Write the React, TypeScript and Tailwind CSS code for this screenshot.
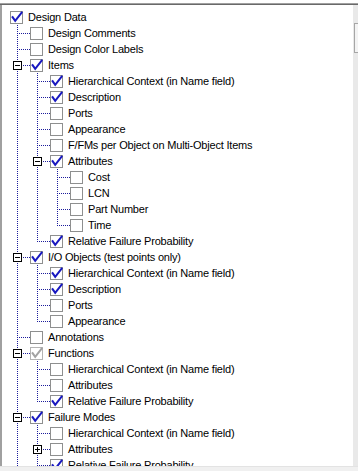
import React from "react";

type Check = "on" | "off" | "gray";
type Node = { label: string; level: number; check: Check; exp?: "minus" | "plus" };

const nodes: Node[] = [
  { label: "Design Data", level: 0, check: "on" },
  { label: "Design Comments", level: 1, check: "off" },
  { label: "Design Color Labels", level: 1, check: "off" },
  { label: "Items", level: 1, check: "on", exp: "minus" },
  { label: "Hierarchical Context (in Name field)", level: 2, check: "on" },
  { label: "Description", level: 2, check: "on" },
  { label: "Ports", level: 2, check: "off" },
  { label: "Appearance", level: 2, check: "off" },
  { label: "F/FMs per Object on Multi-Object Items", level: 2, check: "off" },
  { label: "Attributes", level: 2, check: "on", exp: "minus" },
  { label: "Cost", level: 3, check: "off" },
  { label: "LCN", level: 3, check: "off" },
  { label: "Part Number", level: 3, check: "off" },
  { label: "Time", level: 3, check: "off" },
  { label: "Relative Failure Probability", level: 2, check: "on" },
  { label: "I/O Objects (test points only)", level: 1, check: "on", exp: "minus" },
  { label: "Hierarchical Context (in Name field)", level: 2, check: "on" },
  { label: "Description", level: 2, check: "on" },
  { label: "Ports", level: 2, check: "off" },
  { label: "Appearance", level: 2, check: "off" },
  { label: "Annotations", level: 1, check: "off" },
  { label: "Functions", level: 1, check: "gray", exp: "minus" },
  { label: "Hierarchical Context (in Name field)", level: 2, check: "off" },
  { label: "Attributes", level: 2, check: "off" },
  { label: "Relative Failure Probability", level: 2, check: "on" },
  { label: "Failure Modes", level: 1, check: "on", exp: "minus" },
  { label: "Hierarchical Context (in Name field)", level: 2, check: "off" },
  { label: "Attributes", level: 2, check: "off", exp: "plus" },
  { label: "Relative Failure Probability", level: 2, check: "on" },
];

const LINE = "#1c1c9c";

function hasLine(i: number, k: number): boolean {
  for (let j = i + 1; j < nodes.length; j++) {
    if (nodes[j].level <= k) return nodes[j].level === k;
  }
  return true;
}

function CheckBox({ check }: { check: Check }) {
  const border = check === "gray" ? "#b4b4b4" : "#8e8f8f";
  const color = check === "gray" ? "#a3a3a3" : "#1818c0";
  return (
    <svg width="13" height="13" viewBox="0 0 13 13" className="shrink-0 block">
      <rect x="0.5" y="0.5" width="12" height="12" fill="#ffffff" stroke={border} />
      {check !== "off" && (
        <polyline
          points="2.6,6.2 5.2,9.8 11.6,1.6"
          fill="none"
          stroke={color}
          strokeWidth="2"
          strokeLinecap="square"
          strokeLinejoin="miter"
        />
      )}
    </svg>
  );
}

function AncestorCell({ on }: { on: boolean }) {
  return (
    <svg width="20" height="16" viewBox="0 0 20 16" className="shrink-0 block">
      {on && (
        <line x1="10.5" y1="0" x2="10.5" y2="16" stroke={LINE} strokeDasharray="1 1" />
      )}
    </svg>
  );
}

function ConnectorCell({ next, exp }: { next: boolean; exp?: "minus" | "plus" }) {
  return (
    <svg width="23" height="16" viewBox="0 0 23 16" className="shrink-0 block">
      <line x1="10.5" y1="0" x2="10.5" y2={next ? 16 : 9} stroke={LINE} strokeDasharray="1 1" />
      <line x1="10" y1="8.5" x2="23" y2="8.5" stroke={LINE} strokeDasharray="1 1" />
      {exp && (
        <g>
          <rect x="6.5" y="4.5" width="8" height="8" fill="#ffffff" stroke="#000000" />
          <line x1="8" y1="8.5" x2="13" y2="8.5" stroke="#000000" />
          {exp === "plus" && <line x1="10.5" y1="6" x2="10.5" y2="11" stroke="#000000" />}
        </g>
      )}
    </svg>
  );
}

function Row({ node, index }: { node: Node; index: number }) {
  const L = node.level;
  const cells: React.ReactNode[] = [];
  for (let k = 1; k < L; k++) {
    cells.push(<AncestorCell key={k} on={hasLine(index, k)} />);
  }
  return (
    <div className={`flex items-center h-4 ${L === 0 ? "pl-[8px]" : "pl-[5px]"}`}>
      {cells}
      {L > 0 && <ConnectorCell next={hasLine(index, L)} exp={node.exp} />}
      <CheckBox check={node.check} />
      <span className="ml-[5px] whitespace-nowrap text-[11px] leading-4 text-black tracking-[-0.2px]">
        {node.label}
      </span>
    </div>
  );
}

export default function App() {
  return (
    <div className="w-[358px] h-[471px] bg-white overflow-hidden flex flex-col font-['Liberation_Sans',Arial,sans-serif]">
      <div className="h-[3px] bg-white shrink-0" />
      <div className="h-[463px] shrink-0 border-t border-t-[#a0a0a0] flex flex-col">
        <div className="flex-1 border-t border-t-[#696969] flex min-h-0">
          <div className="w-[353px] shrink-0 border-l-2 border-l-[#a0a0a0] bg-white overflow-hidden pt-[4px]">
            {nodes.map((n, i) => (
              <Row key={i} node={n} index={i} />
            ))}
          </div>
          <div className="flex-1 bg-[#e9e9e9] pt-[18px] pl-[1px]">
            <div className="h-[30px] bg-[#f3f3f3] border border-r-0 border-[#a6a6a6]" />
          </div>
        </div>
      </div>
      <div className="flex-1 bg-[#f0f0f0] border-t border-t-[#e3e3e3]" />
    </div>
  );
}
